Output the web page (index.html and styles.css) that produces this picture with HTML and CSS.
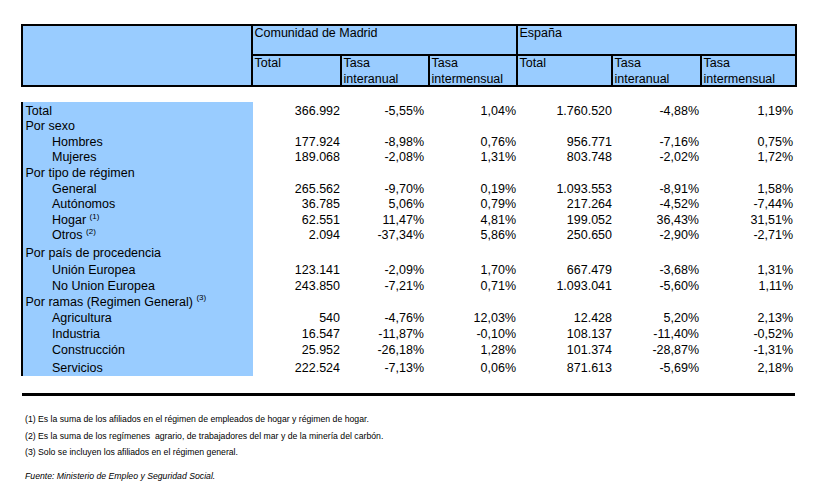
FILE: index.html
```html
<!DOCTYPE html>
<html lang="es">
<head>
<meta charset="utf-8">
<title>Afiliados a la Seguridad Social</title>
<link rel="stylesheet" href="styles.css">
</head>
<body>
<div class="page">
  <div class="head">
    <div class="hc hlabel"></div>
    <div class="hc hmad"><div class="ht">Comunidad de Madrid</div></div>
    <div class="hc hesp"><div class="ht">España</div></div>
    <div class="hc"><div class="ht">Total</div></div>
    <div class="hc"><div class="ht">Tasa<br>interanual</div></div>
    <div class="hc"><div class="ht">Tasa<br>intermensual</div></div>
    <div class="hc"><div class="ht">Total</div></div>
    <div class="hc"><div class="ht">Tasa<br>interanual</div></div>
    <div class="hc"><div class="ht">Tasa<br>intermensual</div></div>
  </div>

  <div class="tbody">
    <div class="row first"><div class="lab">Total</div><div class="n">366.992</div><div class="n">-5,55%</div><div class="n">1,04%</div><div class="n">1.760.520</div><div class="n">-4,88%</div><div class="n">1,19%</div></div>
    <div class="row"><div class="lab">Por sexo</div><div class="n"></div><div class="n"></div><div class="n"></div><div class="n"></div><div class="n"></div><div class="n"></div></div>
    <div class="row"><div class="lab sub">Hombres</div><div class="n">177.924</div><div class="n">-8,98%</div><div class="n">0,76%</div><div class="n">956.771</div><div class="n">-7,16%</div><div class="n">0,75%</div></div>
    <div class="row"><div class="lab sub">Mujeres</div><div class="n">189.068</div><div class="n">-2,08%</div><div class="n">1,31%</div><div class="n">803.748</div><div class="n">-2,02%</div><div class="n">1,72%</div></div>
    <div class="row"><div class="lab">Por tipo de régimen</div><div class="n"></div><div class="n"></div><div class="n"></div><div class="n"></div><div class="n"></div><div class="n"></div></div>
    <div class="row"><div class="lab sub">General</div><div class="n">265.562</div><div class="n">-9,70%</div><div class="n">0,19%</div><div class="n">1.093.553</div><div class="n">-8,91%</div><div class="n">1,58%</div></div>
    <div class="row"><div class="lab sub">Autónomos</div><div class="n">36.785</div><div class="n">5,06%</div><div class="n">0,79%</div><div class="n">217.264</div><div class="n">-4,52%</div><div class="n">-7,44%</div></div>
    <div class="row"><div class="lab sub">Hogar&nbsp;<sup class="note">(1)</sup></div><div class="n">62.551</div><div class="n">11,47%</div><div class="n">4,81%</div><div class="n">199.052</div><div class="n">36,43%</div><div class="n">31,51%</div></div>
    <div class="row"><div class="lab sub">Otros&nbsp;<sup class="note">(2)</sup></div><div class="n">2.094</div><div class="n">-37,34%</div><div class="n">5,86%</div><div class="n">250.650</div><div class="n">-2,90%</div><div class="n">-2,71%</div></div>
    <div class="row tall"><div class="lab">Por país de procedencia</div><div class="n"></div><div class="n"></div><div class="n"></div><div class="n"></div><div class="n"></div><div class="n"></div></div>
    <div class="row tall"><div class="lab sub">Unión Europea</div><div class="n">123.141</div><div class="n">-2,09%</div><div class="n">1,70%</div><div class="n">667.479</div><div class="n">-3,68%</div><div class="n">1,31%</div></div>
    <div class="row mid"><div class="lab sub">No Union Europea</div><div class="n">243.850</div><div class="n">-7,21%</div><div class="n">0,71%</div><div class="n">1.093.041</div><div class="n">-5,60%</div><div class="n">1,11%</div></div>
    <div class="row mid"><div class="lab">Por ramas (Regimen General)&nbsp;<sup class="note">(3)</sup></div><div class="n"></div><div class="n"></div><div class="n"></div><div class="n"></div><div class="n"></div><div class="n"></div></div>
    <div class="row mid"><div class="lab sub">Agricultura</div><div class="n">540</div><div class="n">-4,76%</div><div class="n">12,03%</div><div class="n">12.428</div><div class="n">5,20%</div><div class="n">2,13%</div></div>
    <div class="row mid"><div class="lab sub">Industria</div><div class="n">16.547</div><div class="n">-11,87%</div><div class="n">-0,10%</div><div class="n">108.137</div><div class="n">-11,40%</div><div class="n">-0,52%</div></div>
    <div class="row mid"><div class="lab sub">Construcción</div><div class="n">25.952</div><div class="n">-26,18%</div><div class="n">1,28%</div><div class="n">101.374</div><div class="n">-28,87%</div><div class="n">-1,31%</div></div>
    <div class="row last"><div class="lab sub">Servicios</div><div class="n">222.524</div><div class="n">-7,13%</div><div class="n">0,06%</div><div class="n">871.613</div><div class="n">-5,69%</div><div class="n">2,18%</div></div>
  </div>

  <div class="rule"></div>

  <div class="notes">
    <p>(1) Es la suma de los afiliados en el régimen de empleados de hogar y régimen de hogar.</p>
    <p>(2) Es la suma de los regímenes&nbsp; agrario, de trabajadores del mar y de la minería del carbón.</p>
    <p>(3) Solo se incluyen los afiliados en el régimen general.</p>
    <p class="source">Fuente: Ministerio de Empleo y Seguridad Social.</p>
  </div>
</div>
</body>
</html>
```

FILE: styles.css
```css
html, body {
  margin: 0;
  padding: 0;
  background: #ffffff;
}

body {
  font-family: "Liberation Sans", Arial, sans-serif;
  font-size: 12.5px;
  color: #000000;
}

.page {
  padding: 24px 0 0 21px;
}

/* Header block */
.head {
  display: grid;
  grid-template-columns: 228px 87px 86px 86px 93px 87px 93px;
  grid-template-rows: 28px 29px;
  gap: 2px;
  padding: 2px;
  background: #000000;
  width: max-content;
}

.hc {
  background: #99ccff;
  padding: 0 2px 0 1.5px;
  line-height: 16px;
  overflow: hidden;
}

.ht {
  margin-top: -1px;
}

.hlabel {
  grid-column: 1;
  grid-row: 1 / 3;
}

.hmad {
  grid-column: 2 / 5;
  grid-row: 1;
}

.hesp {
  grid-column: 5 / 8;
  grid-row: 1;
}

/* Body rows */
.tbody {
  margin-top: 15px;
}

.row {
  display: grid;
  grid-template-columns: 232px 87px 84px 92px 96px 87px 94px;
  height: 15.6px;
  line-height: 14px;
}

.row.first { height: 17px; }
.row.tall { height: 17.3px; }
.row.mid { height: 16px; }
.row.last { height: 18px; }

.lab,
.n {
  display: flex;
  align-items: flex-end;
  padding-bottom: 1.3px;
  white-space: nowrap;
}

.lab {
  background: #99ccff;
  border-left: 2px solid #000000;
  padding-left: 2.5px;
}

.lab.sub {
  padding-left: 29px;
}

.n {
  justify-content: flex-end;
}

.note {
  font-size: 8px;
  line-height: 0;
  vertical-align: 6px;
  align-self: flex-start;
  margin-top: 4px;
}

/* Bottom rule */
.rule {
  margin: 16.6px 0 0 1px;
  width: 773px;
  height: 3px;
  background: #000000;
}

/* Footnotes */
.notes {
  margin: 15px 0 0 4px;
  font-size: 8.7px;
  line-height: 16.6px;
}

.notes p {
  margin: 0;
  white-space: nowrap;
}

.notes .source {
  margin-top: 7px;
  font-style: italic;
}
```
